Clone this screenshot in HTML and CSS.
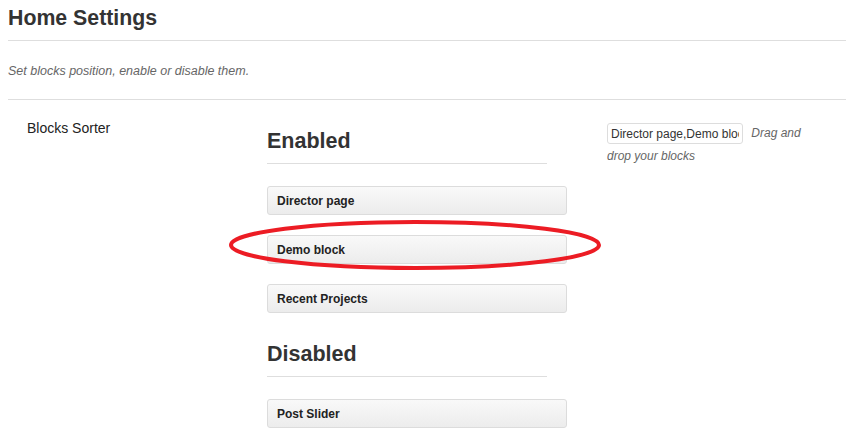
FILE: index.html
```html
<!DOCTYPE html>
<html>
<head>
<meta charset="utf-8">
<link rel="stylesheet" href="styles.css">
</head>
<body>
<div class="page">
  <h1 class="title">Home Settings</h1>
  <p class="desc">Set blocks position, enable or disable them.</p>
  <div class="row">
    <div class="label">Blocks Sorter</div>
    <div class="sorter">
      <h2 class="group-title">Enabled</h2>
      <ul class="blocks">
        <li class="block">Director page</li>
        <li class="block">Demo block</li>
        <li class="block">Recent Projects</li>
      </ul>
      <h2 class="group-title">Disabled</h2>
      <ul class="blocks">
        <li class="block">Post Slider</li>
      </ul>
    </div>
    <div class="field">
      <input class="field-input" type="text" value="Director page,Demo block,Recent Projects">
      <span class="hint">Drag and drop your blocks</span>
    </div>
  </div>
</div>
<svg class="mark" width="380" height="56" viewBox="0 0 380 56">
  <ellipse cx="187" cy="26" rx="184" ry="23" fill="none" stroke="#ec1c24" stroke-width="4"/>
</svg>
</body>
</html>
```
FILE: styles.css
```css
html, body {
  margin: 0;
  padding: 0;
  background: #fff;
}
body {
  position: relative;
  font-family: "Liberation Sans", Arial, sans-serif;
  color: #333;
}
.page {
  width: 838px;
  margin-left: 8px;
}
.title {
  margin: 0;
  padding: 5px 0 9px;
  font-size: 21.3px;
  line-height: 26px;
  font-weight: bold;
  color: #333;
  border-bottom: 1px solid #dedede;
}
.desc {
  margin: 0;
  padding: 23px 0 20px;
  font-size: 12.5px;
  line-height: 15px;
  font-style: italic;
  color: #666;
  border-bottom: 1px solid #dedede;
}
.row {
  display: flex;
  padding-top: 20px;
}
.label {
  width: 240px;
  padding-left: 19px;
  box-sizing: border-box;
  font-size: 14px;
  line-height: 17px;
  color: #222;
}
.sorter {
  width: 300px;
  padding-left: 19px;
}
.group-title {
  width: 280px;
  margin: 0;
  padding: 8px 0 9px;
  font-size: 21.5px;
  line-height: 26px;
  font-weight: bold;
  color: #333;
  border-bottom: 1px solid #dedede;
}
.blocks {
  list-style: none;
  margin: 0;
  padding: 22px 0 20px;
  display: flex;
  flex-direction: column;
  gap: 20px;
}
.blocks:last-child {
  padding-bottom: 0;
}
.block {
  width: 300px;
  height: 29px;
  box-sizing: border-box;
  padding: 0 9px;
  border: 1px solid #dcdcdc;
  border-radius: 3px;
  background: linear-gradient(#f9f9f9, #ececec);
  font-size: 12px;
  line-height: 28px;
  font-weight: bold;
  color: #222;
}
.field {
  width: 210px;
  margin-left: 40px;
  padding-top: 2px;
  font-size: 12px;
  line-height: 23px;
}
.field-input {
  width: 136px;
  height: 21px;
  box-sizing: border-box;
  margin: 0 5px 0 0;
  padding: 1px 3px;
  border: 1px solid #dddddd;
  border-radius: 3px;
  font-family: "Liberation Sans", Arial, sans-serif;
  font-size: 12px;
  color: #333;
  vertical-align: middle;
}
.hint {
  font-style: italic;
  color: #666;
  font-size: 12px;
}
.mark {
  position: absolute;
  left: 228px;
  top: 219px;
}
```
